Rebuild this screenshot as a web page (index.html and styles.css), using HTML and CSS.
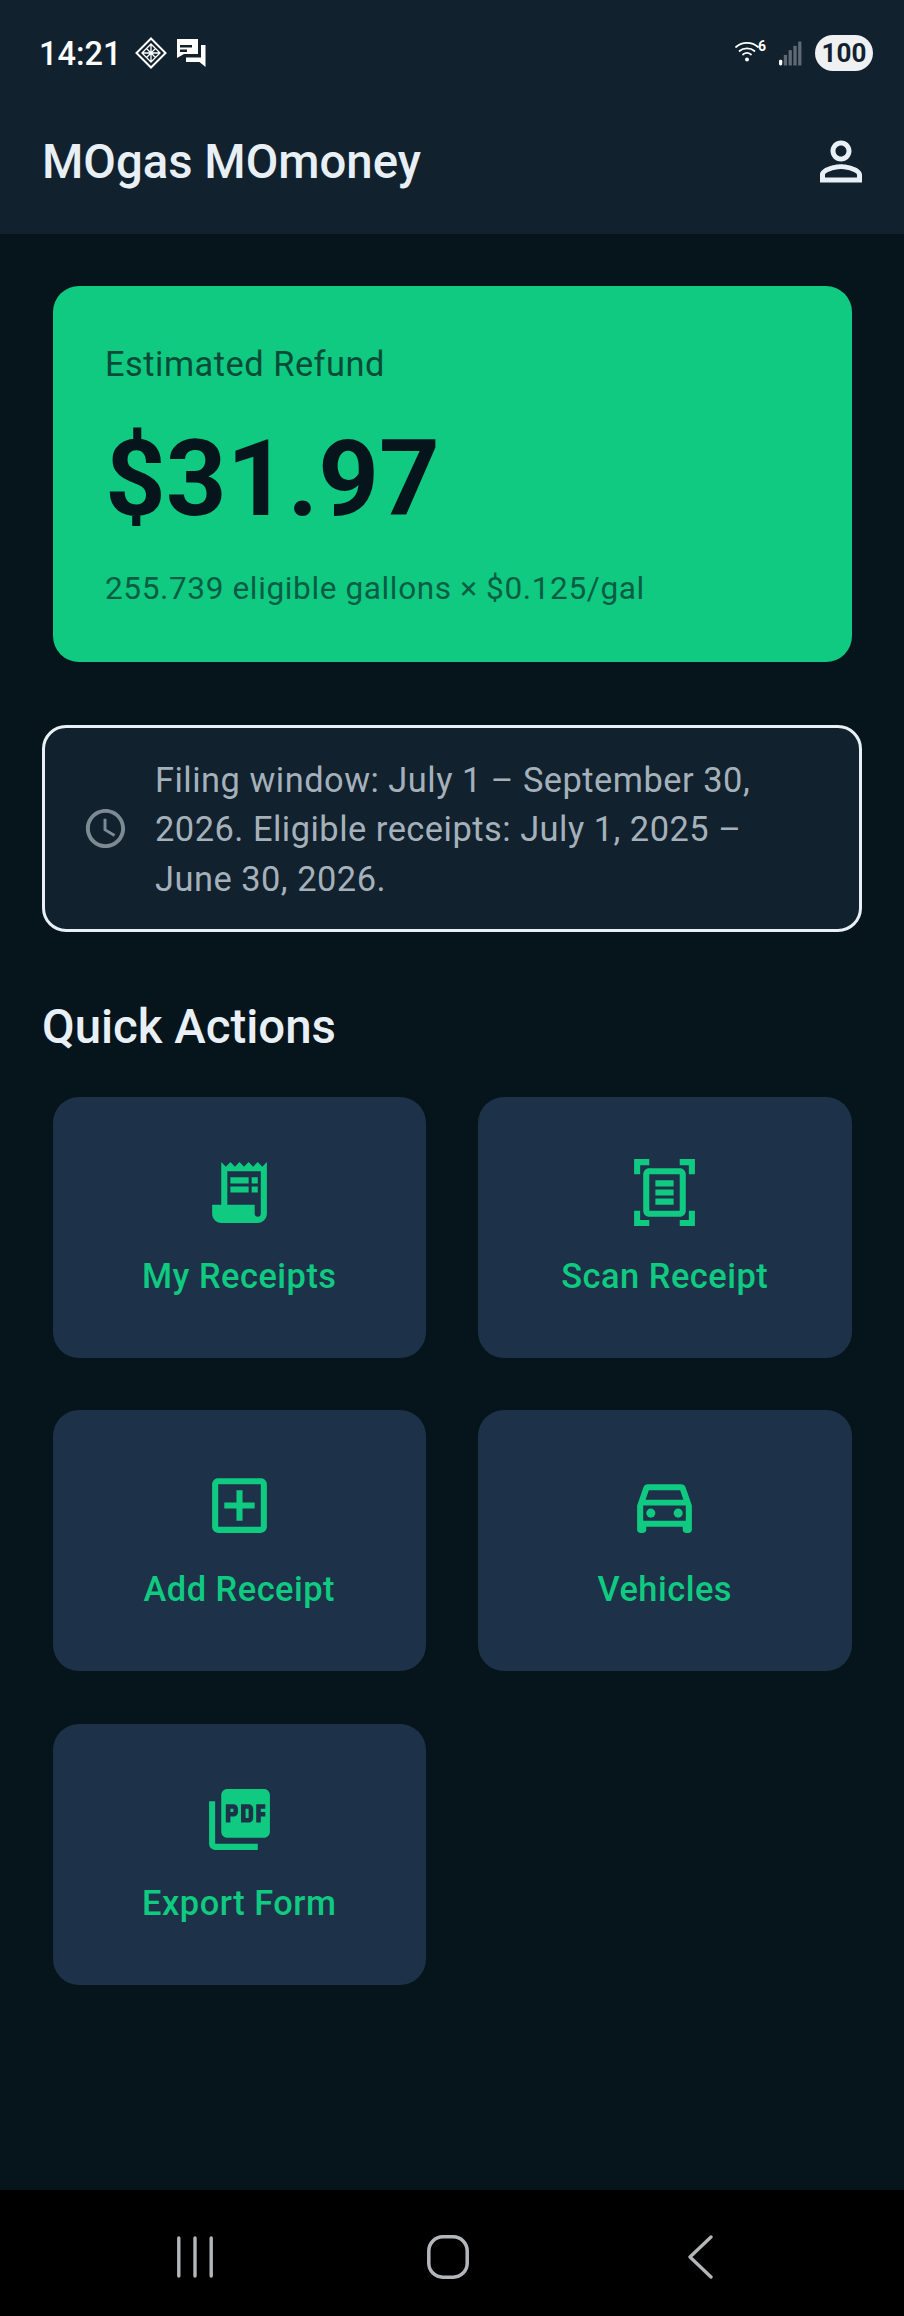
FILE: index.html
```html
<!DOCTYPE html>
<html lang="en">
<head>
<meta charset="utf-8">
<title>MOgas MOmoney</title>
<link rel="stylesheet" href="styles.css">
</head>
<body>
<div class="phone">
  <header class="top">
    <div class="status">
      <div class="status-left">
        <span class="time">14:21</span>
        <svg class="st-diamond" viewBox="0 0 32 32"><g fill="none" stroke="#fff"><path stroke-width="2" d="M16 1.5 30.500 16 16 30.500 1.500 16z"/><path stroke-width="1.300" d="M16 7l9 9-9 9-9-9zM11.500 11.500l9 9M20.500 11.500l-9 9M16 7v18M7 16h18"/></g></svg>
        <svg class="st-chat" viewBox="0 0 29 28"><path fill="#fff" d="M0 0h21v15H7l-7 4z"/><path fill="#12212e" d="M3 6h12v2.500H3zM3 10.500h7V13H3z"/><path fill="#fff" d="M24 6h4.500v22l-6-5H9v-4.500h15z"/></svg>
      </div>
      <div class="status-right">
        <span class="wifi">
          <svg class="st-wifi" viewBox="0 0 24 22"><g fill="none" stroke="#fff" stroke-width="1.700" stroke-linecap="round"><path d="M1 7c6-5.500 16-5.500 22 0"/><path d="M4.500 11c4-3.500 11-3.500 15 0"/><path d="M8 14.500c2.500-2 5.500-2 8 0"/></g><circle cx="12" cy="19.500" r="2" fill="#fff"/></svg>
          <span class="wifi-six">6</span>
        </span>
        <svg class="st-signal" viewBox="0 0 24 25"><rect x="0" y="19" width="3.400" height="6" rx="1.500" fill="#fff"/><rect x="5" y="14" width="3.400" height="11" fill="#5f6b74"/><rect x="10" y="9" width="3.400" height="16" fill="#5f6b74"/><rect x="15" y="4.500" width="3.400" height="20.500" fill="#5f6b74"/><rect x="20" y="0" width="3.400" height="25" fill="#5f6b74"/></svg>
        <span class="battery">100</span>
      </div>
    </div>
    <div class="appbar">
      <h1 class="title">MOgas MOmoney</h1>
      <svg class="person" viewBox="4 4 16 16"><path d="M12 5.900c1.160 0 2.100.94 2.100 2.100s-.94 2.100-2.100 2.100S9.900 9.160 9.900 8s.94-2.100 2.100-2.100m0 9c2.970 0 6.100 1.460 6.100 2.100v1.100H5.900V17c0-.64 3.130-2.100 6.100-2.100M12 4C9.790 4 8 5.790 8 8s1.790 4 4 4 4-1.790 4-4-1.790-4-4-4zm0 9c-2.670 0-8 1.340-8 4v3h16v-3c0-2.660-5.330-4-8-4z"/></svg>
    </div>
  </header>

  <main class="content">
    <section class="refund">
      <p class="refund-label">Estimated Refund</p>
      <p class="refund-amount">$31.97</p>
      <p class="refund-note">255.739 eligible gallons × $0.125/gal</p>
    </section>

    <section class="notice">
      <svg class="clock" viewBox="0 0 24 24"><path d="M11.990 2C6.470 2 2 6.480 2 12s4.470 10 9.990 10C17.520 22 22 17.520 22 12S17.520 2 11.990 2zM12 20c-4.420 0-8-3.580-8-8s3.580-8 8-8 8 3.580 8 8-3.580 8-8 8zm.5-13H11v6l5.250 3.150.75-1.230-4.500-2.670z"/></svg>
      <p class="notice-text">Filing window: July 1 – September 30, 2026. Eligible receipts: July 1, 2025 – June 30, 2026.</p>
    </section>

    <h2 class="section-title">Quick Actions</h2>

    <div class="actions">
      <a class="tile">
        <svg class="tile-icon" viewBox="0 0 24 24"><path d="M19.500 3.500 18 2l-1.500 1.500L15 2l-1.500 1.500L12 2l-1.500 1.500L9 2 7.500 3.500 6 2v14H3v3c0 1.660 1.340 3 3 3h12c1.660 0 3-1.340 3-3V2l-1.500 1.500zM19 19c0 .55-.45 1-1 1s-1-.45-1-1v-3H8V5h11v14z"/><path d="M9 7h6v2H9zm7 0h2v2h-2zm-7 3h6v2H9zm7 0h2v2h-2z"/></svg>
        <span class="tile-label">My Receipts</span>
      </a>
      <a class="tile">
        <svg class="tile-icon" viewBox="0 0 24 24"><path d="M7 3H4v3H2V1h5v2zm15 3V1h-5v2h3v3h2zM7 21H4v-3H2v5h5v-2zm13-3v3h-3v2h5v-5h-2zM17 6H7v12h10V6zm2 12c0 1.100-.9 2-2 2H7c-1.100 0-2-.9-2-2V6c0-1.100.9-2 2-2h10c1.100 0 2 .9 2 2v12zM15 8H9v2h6V8zm0 3H9v2h6v-2zm0 3H9v2h6v-2z"/></svg>
        <span class="tile-label">Scan Receipt</span>
      </a>
      <a class="tile">
        <svg class="tile-icon" viewBox="0 0 24 24"><path d="M19 3H5c-1.100 0-2 .9-2 2v14c0 1.100.9 2 2 2h14c1.100 0 2-.9 2-2V5c0-1.100-.9-2-2-2zm0 16H5V5h14v14zM11 17h2v-4h4v-2h-4V7h-2v4H7v2h4z"/></svg>
        <span class="tile-label">Add Receipt</span>
      </a>
      <a class="tile">
        <svg class="tile-icon" viewBox="0 0 24 24"><path d="M18.920 6.010C18.720 5.420 18.160 5 17.500 5h-11c-.66 0-1.210.42-1.420 1.010L3 12v8c0 .55.45 1 1 1h1c.55 0 1-.45 1-1v-1h12v1c0 .55.45 1 1 1h1c.55 0 1-.45 1-1v-8l-2.080-5.990zM6.850 7h10.290l1.080 3.110H5.770L6.850 7zM19 17H5v-5h14v5z"/><circle cx="7.500" cy="14.500" r="1.500"/><circle cx="16.500" cy="14.500" r="1.500"/></svg>
        <span class="tile-label">Vehicles</span>
      </a>
      <a class="tile">
        <svg class="tile-icon" viewBox="0 0 24 24"><path d="M20 2H8c-1.100 0-2 .9-2 2v12c0 1.100.9 2 2 2h12c1.100 0 2-.9 2-2V4c0-1.100-.9-2-2-2zm-8.500 7.500c0 .83-.67 1.500-1.500 1.500H9v2H7.500V7H10c.83 0 1.500.67 1.500 1.500v1zm5 2c0 .83-.67 1.500-1.500 1.500h-2.500V7H15c.83 0 1.500.67 1.500 1.500v3zm4-3H19v1h1.500V11H19v2h-1.500V7h3v1.500zM9 9.500h1v-1H9v1zM4 6H2v14c0 1.100.9 2 2 2h14v-2H4V6zm10 5.500h1v-3h-1v3z"/></svg>
        <span class="tile-label">Export Form</span>
      </a>
    </div>
  </main>

  <nav class="navbar">
    <svg class="nav-recent" viewBox="0 0 36 42"><g stroke="#b4b6b8" stroke-width="3.400" stroke-linecap="round"><path d="M1.800 2v38M18 2v38M34.200 2v38"/></g></svg>
    <svg class="nav-home" viewBox="0 0 42 44"><rect x="1.800" y="1.800" width="38.400" height="40.400" rx="14" fill="none" stroke="#b4b6b8" stroke-width="3.500"/></svg>
    <svg class="nav-back" viewBox="0 0 25 44"><path d="M23 2 2 22l21 20" fill="none" stroke="#b4b6b8" stroke-width="3.300" stroke-linecap="round" stroke-linejoin="round"/></svg>
  </nav>
</div>
</body>
</html>
```

FILE: styles.css
```css
* { box-sizing: border-box; }
html, body { margin: 0; padding: 0; }
body {
  background: #06141b;
  font-family: Roboto, "Liberation Sans", sans-serif;
}
p, h1, h2 { margin: 0; font-weight: 400; }

.phone {
  width: 904px;
  height: 2316px;
  display: flex;
  flex-direction: column;
  overflow: hidden;
}

.top { background: #12212e; height: 234px; flex: none; }

.status {
  height: 106px;
  padding: 0 31px 0 39px;
  display: flex;
  align-items: center;
  justify-content: space-between;
}
.status-left { display: flex; align-items: center; }
.status-right { display: flex; align-items: center; }
.time {
  color: #fff;
  font-size: 32.500px;
  font-weight: 500;
  width: 96px;
  padding-top: 2px;
}
.st-diamond { width: 32px; height: 32px; flex: none; }
.st-chat { width: 29px; height: 28px; flex: none; margin-left: 10px; }
.wifi {
  display: flex;
  align-items: flex-start;
  position: relative;
  width: 30px;
  height: 22px;
  margin-bottom: 4px;
}
.st-wifi { width: 24px; height: 22px; }
.wifi-six {
  position: absolute;
  left: 23px;
  top: -2px;
  color: #fff;
  font-size: 14px;
  font-weight: 700;
  line-height: 16px;
}
.st-signal { width: 23px; height: 25px; margin-left: 14px; }
.battery {
  margin-left: 13px;
  width: 58px;
  height: 36px;
  border-radius: 18px;
  background: #eef0f2;
  color: #12212e;
  font-size: 26px;
  font-weight: 700;
  line-height: 36px;
  text-align: center;
}

.appbar {
  height: 128px;
  padding: 0 42px 18px 42px;
  display: flex;
  align-items: center;
  justify-content: space-between;
}
.title {
  color: #e8f0f6;
  font-size: 47.300px;
  font-weight: 500;
  line-height: 56px;
  padding-top: 2px;
}
.person { width: 42px; height: 43px; fill: #e8f0f6; }

.content {
  flex: 1;
  padding: 52px 42px 0;
}

.refund {
  margin: 0 10.500px;
  height: 375.500px;
  padding: 58px 52.500px 0;
  background: #0fca80;
  border-radius: 26px;
  color: #06141b;
}
.refund-label {
  font-size: 34.400px;
  line-height: 40px;
  letter-spacing: 0.5px;
  opacity: 0.7;
}
.refund-amount {
  margin-top: 33px;
  font-size: 106px;
  font-weight: 700;
  line-height: 124px;
}
.refund-note {
  margin-top: 29px;
  font-size: 31.600px;
  line-height: 38px;
  letter-spacing: 0.6px;
  opacity: 0.6;
}

.notice {
  margin-top: 63.500px;
  height: 207px;
  padding: 3px 50px 0 36.500px;
  display: flex;
  align-items: center;
  gap: 26.500px;
  background: #12212e;
  border: 3px solid #e8f0f6;
  border-radius: 24px;
}
.clock { width: 47px; height: 47px; flex: none; fill: #7c8a94; margin-top: -3px; }
.notice-text {
  color: #a5b1ba;
  font-size: 34.400px;
  line-height: 49.500px;
  letter-spacing: 0.5px;
}

.section-title {
  margin-top: 69px;
  color: #e8f0f6;
  font-size: 47.400px;
  font-weight: 500;
  line-height: 52px;
}

.actions {
  margin: 44px 10.500px 0;
  display: grid;
  grid-template-columns: 1fr 1fr;
  gap: 52.250px 52px;
}
.tile {
  height: 261px;
  padding-top: 59px;
  display: flex;
  flex-direction: column;
  align-items: center;
  background: #1d3248;
  border-radius: 26px;
}
.tile-icon { width: 73px; height: 73px; fill: #0fca80; }
.tile-label {
  margin-top: 25px;
  color: #0fca80;
  font-size: 34.400px;
  font-weight: 500;
  line-height: 44px;
  letter-spacing: 0.5px;
}

.navbar {
  flex: none;
  height: 126px;
  background: #000;
  display: flex;
  align-items: center;
  padding: 8px 0 0 177px;
}
.nav-recent { width: 36px; height: 42px; }
.nav-home { width: 42px; height: 44px; margin-left: 214px; }
.nav-back { width: 25px; height: 44px; margin-left: 219px; }
```
